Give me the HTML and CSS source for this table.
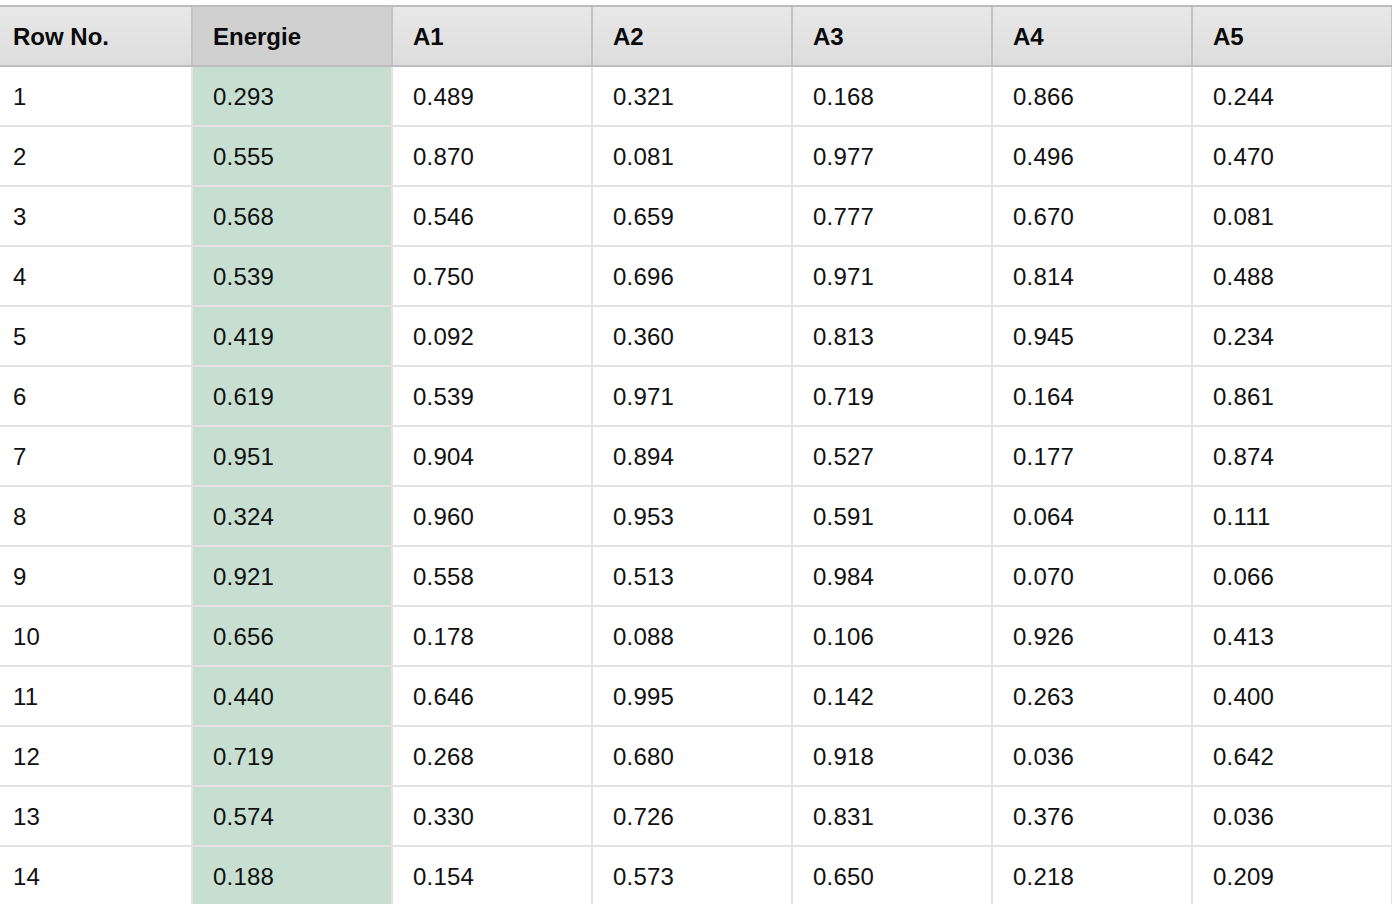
FILE: index.html
```html
<!DOCTYPE html>
<html>
<head>
<meta charset="utf-8">
<link rel="stylesheet" href="styles.css">
</head>
<body>
<table class="grid">
<thead>
<tr><th class="c-row">Row No.</th><th class="c-sel">Energie</th><th>A1</th><th>A2</th><th>A3</th><th>A4</th><th>A5</th></tr>
</thead>
<tbody>
<tr><td class="c-row">1</td><td class="c-sel">0.293</td><td>0.489</td><td>0.321</td><td>0.168</td><td>0.866</td><td>0.244</td></tr>
<tr><td class="c-row">2</td><td class="c-sel">0.555</td><td>0.870</td><td>0.081</td><td>0.977</td><td>0.496</td><td>0.470</td></tr>
<tr><td class="c-row">3</td><td class="c-sel">0.568</td><td>0.546</td><td>0.659</td><td>0.777</td><td>0.670</td><td>0.081</td></tr>
<tr><td class="c-row">4</td><td class="c-sel">0.539</td><td>0.750</td><td>0.696</td><td>0.971</td><td>0.814</td><td>0.488</td></tr>
<tr><td class="c-row">5</td><td class="c-sel">0.419</td><td>0.092</td><td>0.360</td><td>0.813</td><td>0.945</td><td>0.234</td></tr>
<tr><td class="c-row">6</td><td class="c-sel">0.619</td><td>0.539</td><td>0.971</td><td>0.719</td><td>0.164</td><td>0.861</td></tr>
<tr><td class="c-row">7</td><td class="c-sel">0.951</td><td>0.904</td><td>0.894</td><td>0.527</td><td>0.177</td><td>0.874</td></tr>
<tr><td class="c-row">8</td><td class="c-sel">0.324</td><td>0.960</td><td>0.953</td><td>0.591</td><td>0.064</td><td>0.111</td></tr>
<tr><td class="c-row">9</td><td class="c-sel">0.921</td><td>0.558</td><td>0.513</td><td>0.984</td><td>0.070</td><td>0.066</td></tr>
<tr><td class="c-row">10</td><td class="c-sel">0.656</td><td>0.178</td><td>0.088</td><td>0.106</td><td>0.926</td><td>0.413</td></tr>
<tr><td class="c-row">11</td><td class="c-sel">0.440</td><td>0.646</td><td>0.995</td><td>0.142</td><td>0.263</td><td>0.400</td></tr>
<tr><td class="c-row">12</td><td class="c-sel">0.719</td><td>0.268</td><td>0.680</td><td>0.918</td><td>0.036</td><td>0.642</td></tr>
<tr><td class="c-row">13</td><td class="c-sel">0.574</td><td>0.330</td><td>0.726</td><td>0.831</td><td>0.376</td><td>0.036</td></tr>
<tr><td class="c-row">14</td><td class="c-sel">0.188</td><td>0.154</td><td>0.573</td><td>0.650</td><td>0.218</td><td>0.209</td></tr>
</tbody>
</table>
</body>
</html>
```
FILE: styles.css
```css
html, body {
  margin: 0;
  padding: 0;
  overflow: hidden;
  background: #ffffff;
}
body {
  padding-top: 5px;
  font-family: "Liberation Sans", Arial, sans-serif;
  font-size: 24px;
  color: #111111;
}
.grid {
  border-collapse: separate;
  border-spacing: 0;
  table-layout: fixed;
  width: 1393px;
}
.grid th,
.grid td {
  box-sizing: border-box;
  width: 200px;
  height: 60px;
  padding: 0 0 0 20px;
  text-align: left;
  vertical-align: middle;
  white-space: nowrap;
  border-right: 2px solid #e3e3e3;
  border-bottom: 2px solid #e3e3e3;
}
.grid th {
  height: 62px;
  padding-top: 1px;
  font-weight: bold;
  color: #0a0a0a;
  background: linear-gradient(#e7e8e7, #dddddd);
  border-top: 2px solid #bdbdbd;
  border-right-color: #c2c2c2;
  border-bottom-color: #bdbdbd;
}
.grid .c-row {
  width: 193px;
  padding-left: 13px;
}
.grid th.c-sel {
  background: #d0d0d0;
}
.grid td.c-sel {
  background: #c7dfd0;
}
.grid td {
  padding-top: 1px;
  letter-spacing: 0.2px;
}
```
